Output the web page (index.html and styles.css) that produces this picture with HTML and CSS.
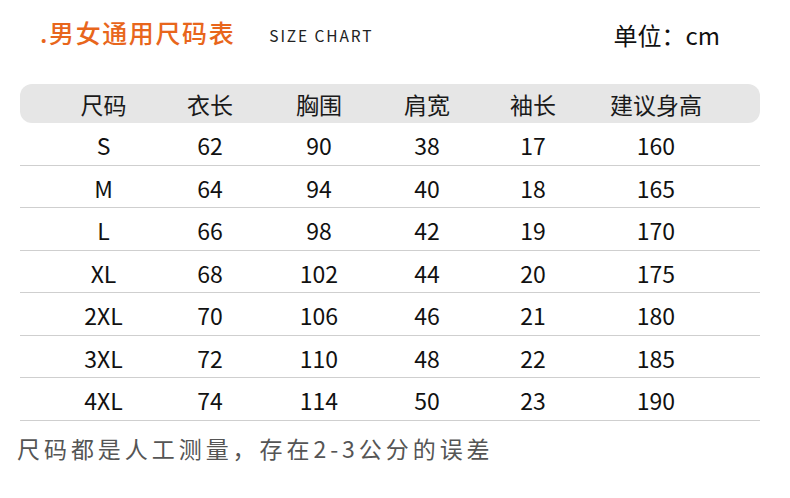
FILE: index.html
```html
<!DOCTYPE html>
<html lang="zh">
<head>
<meta charset="utf-8">
<link rel="stylesheet" href="styles.css">
</head>
<body>
<div class="page">
  <header class="top">
    <div class="title">.男女通用尺码表</div>
    <div class="sub">SIZE CHART</div>
    <div class="unit">单位：cm</div>
  </header>
  <div class="table">
    <div class="row head">
      <div>尺码</div><div>衣长</div><div>胸围</div><div>肩宽</div><div>袖长</div><div>建议身高</div>
    </div>
    <div class="row"><div>S</div><div>62</div><div>90</div><div>38</div><div>17</div><div>160</div></div>
    <div class="row"><div>M</div><div>64</div><div>94</div><div>40</div><div>18</div><div>165</div></div>
    <div class="row"><div>L</div><div>66</div><div>98</div><div>42</div><div>19</div><div>170</div></div>
    <div class="row"><div>XL</div><div>68</div><div>102</div><div>44</div><div>20</div><div>175</div></div>
    <div class="row"><div>2XL</div><div>70</div><div>106</div><div>46</div><div>21</div><div>180</div></div>
    <div class="row"><div>3XL</div><div>72</div><div>110</div><div>48</div><div>22</div><div>185</div></div>
    <div class="row"><div>4XL</div><div>74</div><div>114</div><div>50</div><div>23</div><div>190</div></div>
  </div>
  <p class="note">尺码都是人工测量，存在2-3公分的误差</p>
</div>
</body>
</html>
```
FILE: styles.css
```css
html, body {
  margin: 0;
  padding: 0;
  background: #fff;
}
.page {
  width: 790px;
  height: 498px;
  font-family: "Noto Sans CJK SC", "Noto Sans", sans-serif;
  color: #111;
  overflow: hidden;
}
.top {
  display: flex;
  align-items: center;
  height: 66px;
  padding: 0 70px 0 40px;
}
.title {
  font-size: 25px;
  font-weight: 500;
  color: #e8661c;
  letter-spacing: 1.6px;
  margin-top: -3px;
}
.sub {
  margin-left: 34px;
  font-size: 15.5px;
  letter-spacing: 1.9px;
  color: #222;
  margin-top: 4px;
}
.unit {
  margin-left: auto;
  font-size: 24px;
  color: #111;
  margin-top: 2px;
}
.table {
  margin: 18px 30px 0 20px;
}
.row {
  display: grid;
  grid-template-columns: 107px 106px 112px 104px 108px 138px;
  padding-left: 30px;
  height: 42.5px;
  align-items: center;
  border-bottom: 1px solid #cfcfcf;
  box-sizing: border-box;
  font-size: 23px;
  line-height: 1;
}
.row > div {
  text-align: center;
  padding-top: 4px;
}
.row.head {
  height: 39px;
  background: #e6e6e6;
  border-radius: 12px;
  border-bottom: none;
  color: #1a1a1a;
}
.row.head > div {
  padding-top: 2px;
}
.note {
  margin: 10px 0 0 17px;
  font-size: 23px;
  letter-spacing: 3.95px;
  color: #555;
}
```
